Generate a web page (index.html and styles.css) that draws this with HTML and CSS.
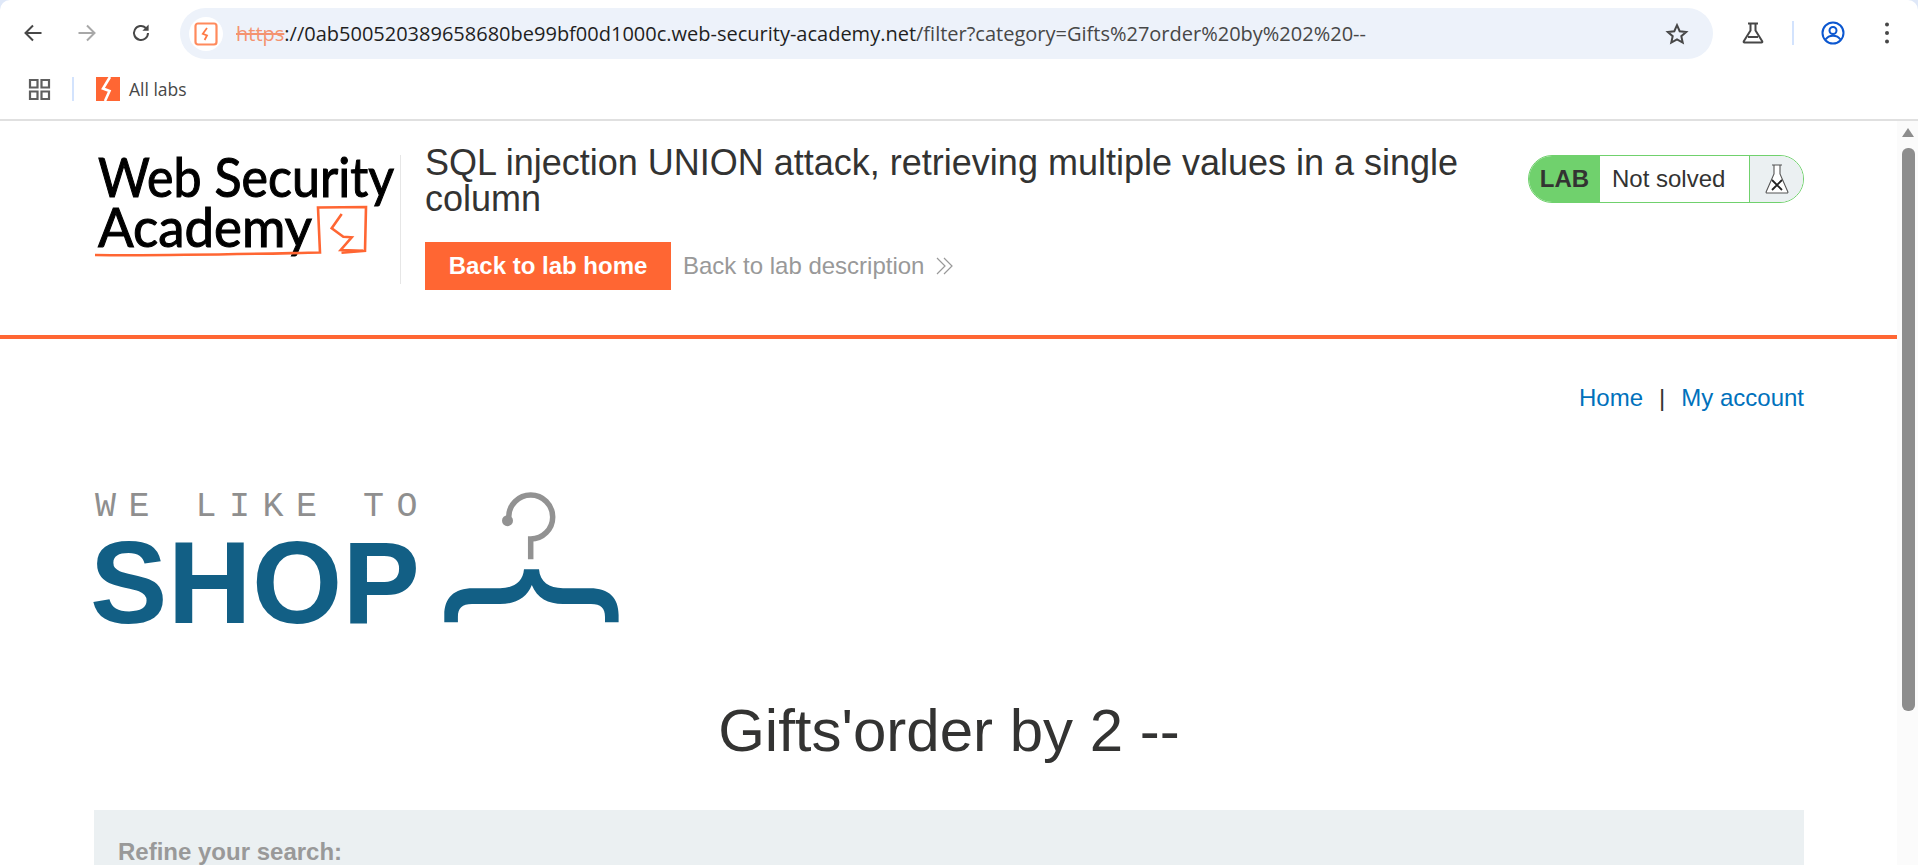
FILE: index.html
```html
<!DOCTYPE html>
<html lang="en">
<head>
    <meta charset="UTF-8">
    <title>SQL injection UNION attack, retrieving multiple values in a single column</title>
    <link rel="stylesheet" href="styles.css">
</head>
<body>
    <div class="browser">
        <div class="toolbar">
            <svg class="tool-icon" viewBox="0 0 24 24"><path d="M20.500 12H5M12 4.500L4.500 12l7.500 7.500" fill="none" stroke="#474747" stroke-width="2"/></svg>
            <svg class="tool-icon" viewBox="0 0 24 24"><path d="M3.500 12H19M12 4.500l7.500 7.500-7.500 7.500" fill="none" stroke="#a8a8a8" stroke-width="2"/></svg>
            <svg class="tool-icon" viewBox="0 0 24 24"><path d="M19 12a7 7 0 1 1-2.200-5.100" fill="none" stroke="#474747" stroke-width="2"/><path d="M19.600 3.600v6.200h-6.200z" fill="#474747"/></svg>
            <div class="omnibox">
                <span class="site-chip">
                    <svg viewBox="0 0 24 24" width="24" height="24"><rect x="1.500" y="1.500" width="21" height="21" rx="2.500" fill="#fff" stroke="#ff8a5c" stroke-width="2.200"/><path d="M13 6L8.800 11.800l4.200 1.600L10.600 18" fill="none" stroke="#ff7a45" stroke-width="1.800"/></svg>
                </span>
                <span class="url"><span class="url-scheme">https</span><span class="url-host">://0ab500520389658680be99bf00d1000c.web-security-academy.net</span>/filter?category=Gifts%27order%20by%202%20--</span>
                <svg class="star" viewBox="0 0 24 24"><path d="M12 3.200l2.700 6 6.500.7-4.900 4.300 1.400 6.400L12 17.300l-5.700 3.300 1.400-6.400-4.900-4.300 6.500-.7z" fill="none" stroke="#474747" stroke-width="2"/></svg>
            </div>
            <svg class="tool-icon flask" viewBox="0 0 24 24"><path d="M7 2.500h10M9.500 2.500v7L2.800 20.300c-.4.700 0 1.200.7 1.200h17c.7 0 1.100-.5.7-1.200L14.500 9.500v-7M7 16h10" fill="none" stroke="#474747" stroke-width="2"/></svg>
            <span class="tool-sep"></span>
            <svg class="tool-icon profile" viewBox="0 0 24 24"><circle cx="12" cy="12" r="10.500" fill="none" stroke="#0b57d0" stroke-width="2"/><circle cx="12" cy="9.500" r="3.500" fill="none" stroke="#0b57d0" stroke-width="2"/><path d="M4.500 18.500c2-3 4.800-3.800 7.500-3.800s5.500.8 7.500 3.800" fill="none" stroke="#0b57d0" stroke-width="2"/></svg>
            <svg class="tool-icon kebab" viewBox="0 0 24 24"><circle cx="12" cy="3.500" r="2" fill="#474747"/><circle cx="12" cy="12" r="2" fill="#474747"/><circle cx="12" cy="20.500" r="2" fill="#474747"/></svg>
        </div>
        <div class="bookmarks">
            <svg class="apps" viewBox="0 0 21 21"><path d="M1 1h7.500v7.500H1zM12.500 1H20v7.500h-7.500zM1 12.500h7.500V20H1zM12.500 12.500H20V20h-7.500z" fill="none" stroke="#5f5f5f" stroke-width="2.200"/></svg>
            <span class="bm-sep"></span>
            <svg class="bm-favicon" viewBox="0 0 24 24"><rect width="24" height="24" fill="#ff6633"/><path d="M14 0L7 11.500l6.500 2.500L9 24" fill="none" stroke="#fff" stroke-width="2.600"/></svg>
            <span class="bm-label">All labs</span>
        </div>
    </div>

    <div class="viewport">
        <div class="page">
            <header class="academy-header">
                <div class="academy-logo">
                    <svg viewBox="94 155 306 129" width="306" height="129">
                        <text class="logo-text" x="98" y="197" textLength="296" lengthAdjust="spacingAndGlyphs">Web Security</text>
                        <text class="logo-text" x="98" y="246.500" textLength="214" lengthAdjust="spacingAndGlyphs">Academy</text>
                        <path d="M95 255c70 1 150-1 225-2.500L318 207.500l48-.5-1 43.700-23.500 2" fill="none" stroke="#ff6633" stroke-width="2.600"/>
                        <path d="M341.700 214l-10 14.300 11.600 8.400 8.400.6-11 12.700 22.300.7" fill="none" stroke="#ff6633" stroke-width="2.600"/>
                    </svg>
                </div>
                <div class="academy-title">
                    <h2>SQL injection UNION attack, retrieving multiple values in a single column</h2>
                    <div class="lab-links">
                        <a class="btn-home">Back to lab home</a>
                        <a class="lab-desc">Back to lab description
                            <svg viewBox="0 0 18 18" width="18" height="18"><path d="M1 1l8 8-8 8M8 1l8 8-8 8" fill="none" stroke="#999" stroke-width="1.200"/></svg>
                        </a>
                    </div>
                </div>
                <div class="lab-status">
                    <span class="status-tag">LAB</span>
                    <span class="status-text">Not solved</span>
                    <span class="status-icon">
                        <svg viewBox="0 0 24 30" width="24" height="30"><path d="M7 1h10M9 1v9L1.200 27.800c-.3.800 0 1.200.8 1.200h20c.8 0 1.100-.4.800-1.200L15 10V1" fill="#fff" stroke="#555" stroke-width="1.100"/><path d="M7 16l10 10M17 16L7 26" stroke="#222" stroke-width="1.800"/></svg>
                    </span>
                </div>
            </header>

            <main class="container">
                <nav class="top-links">
                    <a>Home</a><span class="pipe">|</span><a>My account</a>
                </nav>
                <svg class="shop-logo" viewBox="90 488 535 140" width="535" height="140">
                    <text class="shop-like" x="95" y="516">WE LIKE TO</text>
                    <text class="shop-name" x="90" y="623">SHOP</text>
                    <path d="M508.700 517A22 22 0 1 1 530.700 539V559.300" fill="none" stroke="#929292" stroke-width="5.500"/>
                    <circle cx="507.500" cy="520.700" r="5.500" fill="#929292"/>
                    <path d="M524 569.300H539C540 582 549 588 563 588.300H590C609 588.300 618.600 598 618.600 615V622.300H605V617C605 608 601 604 591 604H563C548 604 537 598 531.800 585C527 598 515 604 500 604H472C462 604 457.900 608 457.900 617V622.300H444.300V615C444.300 598 454 588.300 473 588.300H500C514 588 523 582 524 569.300Z" fill="#125f85"/>
                </svg>
                <h1 class="category-title">Gifts'order by 2 --</h1>
                <section class="filter-panel">
                    <div class="filter-label">Refine your search:</div>
                </section>
            </main>
        </div>
        <div class="scrollbar">
            <span class="scroll-up"></span>
            <span class="scroll-thumb"></span>
        </div>
    </div>
</body>
</html>
```
FILE: styles.css
```css
html, body {
    margin: 0;
    height: 865px;
    overflow: hidden;
}
body {
    background: #dfe8f8;
    font-family: "Liberation Sans", Arial, sans-serif;
    color: #333332;
}
a {
    text-decoration: none;
}
svg {
    overflow: visible;
}

/* browser bar */
.browser {
    height: 119px;
    background: #fff;
    border-radius: 10px 10px 0 0;
    border-bottom: 2px solid #e0e0e0;
}
.toolbar {
    height: 66px;
    display: flex;
    align-items: center;
    padding-left: 21px;
}
.tool-icon {
    width: 24px;
    height: 24px;
    margin-right: 30px;
    flex: none;
}
.omnibox {
    width: 1533px;
    height: 51px;
    margin: 1px 0 0 -3px;
    background: #edf2fa;
    border-radius: 26px;
    display: flex;
    align-items: center;
    flex: none;
}
.site-chip {
    width: 34px;
    height: 34px;
    margin-left: 9px;
    background: #fff;
    border-radius: 50%;
    display: flex;
    align-items: center;
    justify-content: center;
    flex: none;
}
.url {
    margin-left: 13px;
    font-family: "Open Sans", sans-serif;
    font-size: 20px;
    color: #474747;
    white-space: nowrap;
    flex: 1;
}
.url-scheme {
    color: #f4936f;
    text-decoration: line-through;
}
.url-host {
    color: #1f1f1f;
}
.star {
    width: 24px;
    height: 24px;
    margin-right: 24px;
    flex: none;
}
.flask {
    margin: 0 0 0 28px;
}
.tool-sep {
    width: 2px;
    height: 24px;
    margin: 0 27px;
    background: #d3e3fd;
}
.profile {
    margin-right: 30px;
}
.kebab {
    margin-right: 0;
}
.bookmarks {
    height: 46px;
    display: flex;
    align-items: center;
    padding-left: 29px;
}
.apps {
    width: 21px;
    height: 21px;
}
.bm-sep {
    width: 2px;
    height: 24px;
    margin: 0 22px;
    background: #d3e3fd;
}
.bm-favicon {
    width: 24px;
    height: 24px;
}
.bm-label {
    margin-left: 9px;
    font-family: "Open Sans", sans-serif;
    font-size: 17.500px;
    color: #474747;
}

/* page area */
.viewport {
    height: 744px;
    background: #fff;
    display: flex;
    overflow: hidden;
}
.page {
    width: 1897px;
    flex: none;
}
.academy-header {
    height: 218px;
    box-sizing: border-box;
    border-bottom: 4px solid #ff6633;
    display: flex;
    align-items: flex-start;
    padding: 34px 93px 0 94px;
}
.academy-logo {
    width: 306px;
    height: 129px;
    border-right: 1px solid #e6e6e6;
    flex: none;
}
.logo-text {
    font-family: Lato, sans-serif;
    font-size: 55px;
    fill: #000;
    stroke: #000;
    stroke-width: 1.1px;
}
.academy-title {
    width: 1090px;
    margin-left: 24px;
    flex: none;
}
.academy-title h2 {
    margin: -10px 0 0;
    font-size: 36px;
    font-weight: 400;
    line-height: 36px;
}
.lab-links {
    display: flex;
    align-items: center;
    margin-top: 25px;
}
.btn-home {
    width: 246px;
    height: 48px;
    background: #ff6633;
    color: #fff;
    font-size: 24px;
    font-weight: 700;
    display: flex;
    align-items: center;
    justify-content: center;
}
.lab-desc {
    margin-left: 12px;
    color: #999;
    font-size: 24px;
    display: flex;
    align-items: center;
    gap: 12px;
}
.lab-status {
    width: 276px;
    height: 48px;
    margin-left: auto;
    border: 1px solid #70d16d;
    border-radius: 24px;
    box-sizing: border-box;
    overflow: hidden;
    display: flex;
    align-items: center;
    flex: none;
}
.status-tag {
    width: 71px;
    height: 100%;
    background: #70d16d;
    font-size: 24px;
    font-weight: 700;
    display: flex;
    align-items: center;
    justify-content: center;
}
.status-text {
    width: 150px;
    padding-left: 12px;
    box-sizing: border-box;
    font-size: 24px;
    border-right: 1px solid #70d16d;
    height: 100%;
    display: flex;
    align-items: center;
}
.status-icon {
    flex: 1;
    height: 100%;
    background: #ebf0f2;
    display: flex;
    align-items: center;
    justify-content: center;
}

.container {
    padding: 0 93px 0 94px;
}
.top-links {
    display: flex;
    justify-content: flex-end;
    align-items: center;
    margin-top: 44px;
    font-size: 24px;
    line-height: 30px;
}
.top-links a {
    color: #0071bc;
}
.pipe {
    margin: 0 16px;
}
.shop-logo {
    display: block;
    margin: 75px 0 0 -4px;
}
.shop-like {
    font-family: "Liberation Mono", monospace;
    font-size: 35px;
    letter-spacing: 12.500px;
    fill: #8f8f8f;
}
.shop-name {
    font-size: 116px;
    font-weight: 700;
    letter-spacing: 0.4px;
    fill: #125f85;
}
.category-title {
    margin: 68px 0 0;
    text-align: center;
    font-size: 60px;
    font-weight: 400;
    line-height: 70px;
}
.filter-panel {
    margin-top: 44px;
    height: 55px;
    padding: 29px 24px 0;
    background: #ebf0f2;
    box-sizing: border-box;
}
.filter-label {
    font-size: 24px;
    line-height: 25px;
    font-weight: 700;
    color: #999;
}

/* scrollbar */
.scrollbar {
    width: 21px;
    background: #fbfbfb;
    display: flex;
    flex-direction: column;
    flex: none;
}
.scroll-up {
    width: 0;
    margin: 7px 0 0 5px;
    border-left: 6px solid transparent;
    border-right: 6px solid transparent;
    border-bottom: 9px solid #8d8d8d;
}
.scroll-thumb {
    width: 13px;
    height: 563px;
    margin: 11px 0 0 5px;
    background: #8d8d8d;
    border-radius: 6px;
}
```
